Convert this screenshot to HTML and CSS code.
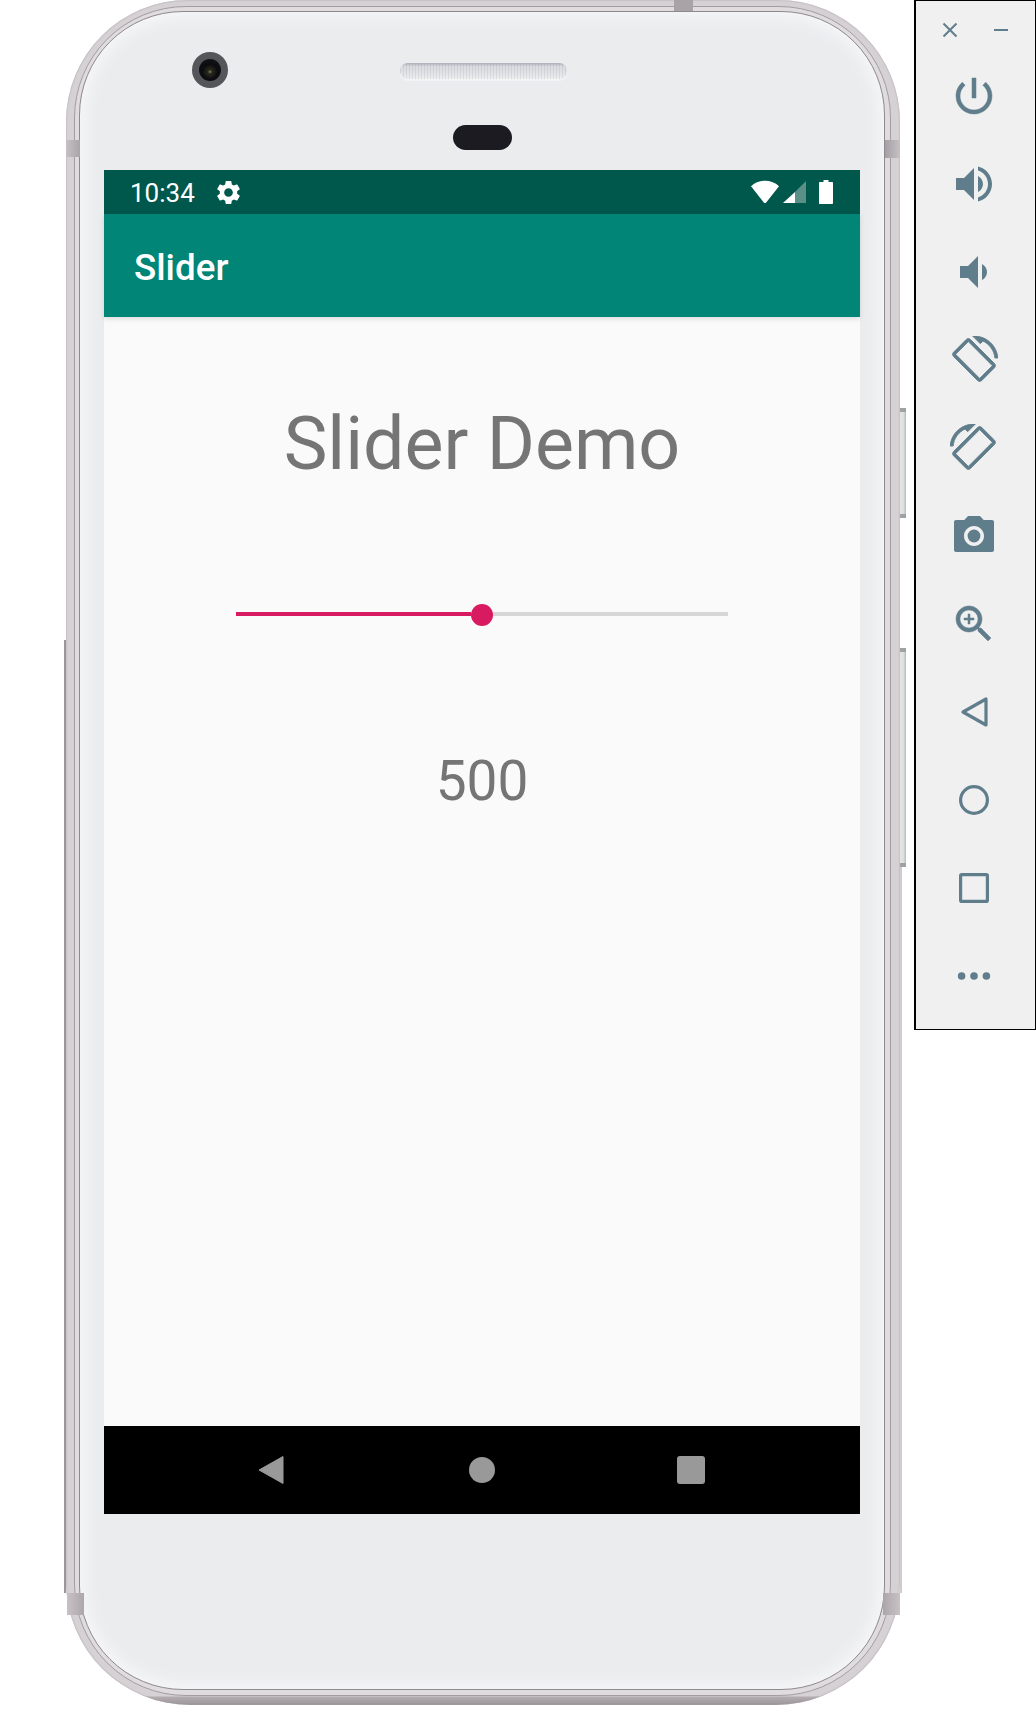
FILE: index.html
```html
<!DOCTYPE html>
<html lang="en">
<head>
<meta charset="utf-8">
<title>Slider</title>
<link rel="stylesheet" href="styles.css">
</head>
<body>
<div class="stage">
  <div class="phone">
    <span class="seam seam-top"></span>
    <span class="seam seam-lt"></span>
    <span class="seam seam-rt"></span>
    <span class="seam seam-lb"></span>
    <span class="seam seam-rb"></span>
    <span class="side-key key-power"></span>
    <span class="side-key key-volume"></span>
    <span class="left-edge"></span>
    <span class="right-edge"></span>
    <div class="rim">
      <div class="face">
        <div class="top-zone">
          <div class="top-row">
            <div class="lens"><div class="lens-glass"></div></div>
            <div class="speaker"></div>
          </div>
          <div class="sensor"></div>
        </div>
        <div class="screen">
          <div class="status-bar">
            <span class="clock">10:34</span>
            <svg class="gear" viewBox="0 0 24 24"><path d="M19.14 12.94c.04-.3.06-.61.06-.94 0-.32-.02-.64-.07-.94l2.03-1.58c.18-.14.23-.41.12-.61l-1.92-3.32c-.12-.22-.37-.29-.59-.22l-2.39.96c-.5-.38-1.03-.7-1.62-.94l-.36-2.54c-.04-.24-.24-.41-.48-.41h-3.84c-.24 0-.43.17-.47.41l-.36 2.54c-.59.24-1.13.57-1.62.94l-2.39-.96c-.22-.08-.47 0-.59.22L2.74 8.87c-.12.21-.08.47.12.61l2.03 1.58c-.05.3-.09.63-.09.94s.02.64.07.94l-2.03 1.58c-.18.14-.23.41-.12.61l1.92 3.32c.12.22.37.29.59.22l2.39-.96c.5.38 1.03.7 1.62.94l.36 2.54c.05.24.24.41.48.41h3.84c.24 0 .44-.17.47-.41l.36-2.54c.59-.24 1.13-.56 1.62-.94l2.39.96c.22.08.47 0 .59-.22l1.92-3.32c.12-.22.07-.47-.12-.61l-2.01-1.58zM12 15.6c-1.98 0-3.6-1.62-3.6-3.6s1.62-3.6 3.6-3.6 3.6 1.62 3.6 3.6-1.62 3.6-3.6 3.6z"/></svg>
            <span class="status-spacer"></span>
            <svg class="wifi" viewBox="0 0 28 24"><path d="M0 6.2C3.6 2.700 8.600 .8 14 .8s10.400 1.900 14 5.400L15.200 22.500c-.6.8-1.800.8-2.400 0z"/></svg>
            <svg class="signal" viewBox="0 0 23 24"><path class="signal-dim" d="M23 1v22H12V12z"/><path d="M12 12v11H0z"/></svg>
            <svg class="battery" viewBox="0 0 14 24"><path d="M4.500 0h5v2H13c.6 0 1 .4 1 1v20c0 .6-.4 1-1 1H1c-.6 0-1-.4-1-1V3c0-.6.4-1 1-1h3.500z"/></svg>
          </div>
          <div class="app-bar"><span class="app-title">Slider</span></div>
          <div class="content">
            <h1 class="demo-title">Slider Demo</h1>
            <div class="slider">
              <div class="slider-fill"></div>
              <div class="slider-thumb"></div>
              <div class="slider-rest"></div>
            </div>
            <div class="slider-value">500</div>
          </div>
          <div class="nav-bar">
            <svg class="nav-back" viewBox="0 0 26 30"><path d="M25 1.500v27L1 15z"/></svg>
            <span class="nav-home"></span>
            <span class="nav-recent"></span>
          </div>
        </div>
      </div>
    </div>
  </div>
  <aside class="tools">
    <div class="tools-head">
      <svg class="head-icon" viewBox="0 0 16 16"><path d="M1.500 1.500l13 13M14.500 1.500l-13 13"/></svg>
      <svg class="head-icon" viewBox="0 0 16 16"><path d="M1 8h14"/></svg>
    </div>
    <svg class="tool tool-bold" viewBox="0 0 24 24"><path d="M13 3h-2v10h2V3zm4.830 2.170l-1.420 1.420C17.990 7.860 19 9.810 19 12c0 3.870-3.130 7-7 7s-7-3.130-7-7c0-2.190 1.010-4.140 2.580-5.420L6.170 5.170C4.230 6.820 3 9.260 3 12c0 4.970 4.030 9 9 9s9-4.030 9-9c0-2.740-1.230-5.180-3.170-6.830z"/></svg>
    <svg class="tool" viewBox="0 0 24 24"><path d="M3 9v6h4l5 5V4L7 9H3zm13.500 3c0-1.770-1.020-3.290-2.500-4.030v8.050c1.480-.73 2.500-2.250 2.500-4.020zM14 3.230v2.060c2.890.86 5 3.540 5 6.710s-2.110 5.850-5 6.710v2.060c4.010-.91 7-4.490 7-8.770s-2.990-7.860-7-8.770z"/></svg>
    <svg class="tool" viewBox="0 0 24 24"><path d="M18.500 12c0-1.770-1.020-3.290-2.500-4.030v8.050c1.480-.73 2.500-2.250 2.500-4.020zM5 9v6h4l5 5V4L9 9H5z"/></svg>
    <svg class="tool tool-heavy" viewBox="0 0 24 24"><path d="M16.480 2.520c3.270 1.550 5.610 4.720 5.970 8.480h1.500C23.440 4.840 18.290 0 12 0l-.66.030 3.810 3.810 1.330-1.320zm-6.250-.77c-.59-.59-1.540-.59-2.120 0L1.750 8.110c-.59.59-.59 1.540 0 2.120l12.020 12.020c.59.59 1.540.59 2.120 0l6.360-6.360c.59-.59.59-1.540 0-2.120L10.230 1.750zm4.600 19.440L2.810 9.170l6.360-6.360 12.020 12.020-6.360 6.360z"/></svg>
    <svg class="tool tool-heavy tool-mirror" viewBox="0 0 24 24"><path d="M16.480 2.520c3.270 1.550 5.610 4.720 5.970 8.480h1.500C23.440 4.840 18.290 0 12 0l-.66.030 3.810 3.810 1.330-1.320zm-6.250-.77c-.59-.59-1.540-.59-2.120 0L1.750 8.110c-.59.59-.59 1.540 0 2.120l12.020 12.020c.59.59 1.540.59 2.120 0l6.360-6.360c.59-.59.59-1.540 0-2.120L10.230 1.750zm4.600 19.440L2.810 9.170l6.360-6.360 12.020 12.020-6.360 6.360z"/></svg>
    <svg class="tool" viewBox="0 0 24 24"><path fill-rule="evenodd" d="M9 2L7.170 4H3c-.6 0-1 .4-1 1v14c0 .6.4 1 1 1h18c.6 0 1-.4 1-1V5c0-.6-.4-1-1-1h-4.170L15 2H9zm3 15c-2.760 0-5-2.240-5-5s2.240-5 5-5 5 2.240 5 5-2.240 5-5 5z"/><circle cx="12" cy="12" r="3.200"/></svg>
    <svg class="tool tool-bold" viewBox="0 0 24 24"><path d="M15.500 14h-.79l-.28-.27C15.410 12.590 16 11.110 16 9.500 16 5.910 13.090 3 9.500 3S3 5.910 3 9.500 5.910 16 9.500 16c1.610 0 3.090-.59 4.230-1.570l.27.280v.79l5 4.990L20.490 19l-4.990-5zm-6 0C7.010 14 5 11.990 5 9.500S7.010 5 9.500 5 14 7.010 14 9.500 11.990 14 9.500 14zm2.500-4h-2v2H9v-2H7V9h2V7h1v2h2v1z"/></svg>
    <svg class="tool tool-line" viewBox="0 0 24 24"><path d="M18 5.500v13L6.500 12z"/></svg>
    <svg class="tool tool-line" viewBox="0 0 24 24"><circle cx="12" cy="12" r="6.700"/></svg>
    <svg class="tool tool-line" viewBox="0 0 24 24"><rect x="5.300" y="5.300" width="13.400" height="13.400" rx=".6"/></svg>
    <svg class="tool" viewBox="0 0 24 24"><circle cx="5.800" cy="12" r="1.900"/><circle cx="12" cy="12" r="1.900"/><circle cx="18.200" cy="12" r="1.900"/></svg>
  </aside>
</div>
</body>
</html>
```
FILE: styles.css
```css
* { box-sizing: border-box; }
html, body { margin: 0; padding: 0; background: #fff; }
body { width: 1036px; height: 1728px; overflow: hidden; font-family: Roboto, "Liberation Sans", sans-serif; }

.stage { display: flex; align-items: flex-start; }

/* Device shell */
.phone {
  position: relative;
  flex: none;
  width: 834px;
  height: 1705px;
  margin-left: 66px;
  padding: 6px 9px 9px 8px;
  border-radius: 122px 122px 124px 124px;
  background: linear-gradient(180deg, #d6d1d4 0, #d6d1d4 1696px, #b3acb0 1697px, #9c9499 1705px);
  box-shadow: inset 0 0 2px #a39da1;
}
.rim {
  height: 100%;
  padding: 4px 5px 5px 4px;
  border: 1px solid #a29da1;
  border-radius: 112px;
  background: #e0dcde;
}
.face {
  display: flex;
  flex-direction: column;
  height: 100%;
  padding: 0 24px;
  border: 1px solid #8f8a8e;
  border-radius: 104px;
  background: #ebecee;
  box-shadow: inset 0 0 14px 6px #f5f6f8;
}
.seam { position: absolute; background: linear-gradient(90deg, #c6c0c4, #aaa5a9); }
.seam-top { left: 608px; top: 0; width: 19px; height: 11px; background: #a9a3a7; }
.seam-lt { left: 0; top: 140px; width: 14px; height: 17px; }
.seam-rt { right: 0; top: 140px; width: 15px; height: 18px; background: linear-gradient(90deg, #a5a0a4, #c6c0c4); }
.seam-lb { left: 1px; top: 1593px; width: 17px; height: 22px; background: linear-gradient(90deg, #c8c2c6, #aca6aa); }
.seam-rb { right: 0; top: 1593px; width: 17px; height: 22px; background: linear-gradient(90deg, #aca6aa, #c8c2c6); }
.side-key {
  position: absolute; right: -6px; width: 6px;
  border-top: 4px solid #9fa2a3; border-bottom: 4px solid #9fa2a3;
  background: linear-gradient(90deg, #e6e8e6 0, #dcdedc 60%, #b6b9ba 100%);
}
.key-power { top: 408px; height: 110px; }
.key-volume { top: 648px; height: 219px; }
.left-edge { position: absolute; left: -2px; top: 640px; width: 2px; height: 953px; background: #98989b; }
.right-edge { position: absolute; right: -2px; top: 867px; width: 2px; height: 726px; background: #d0cbce; }

/* Earpiece area */
.top-zone { flex: none; height: 158px; display: flex; flex-direction: column; padding-top: 40px; }
.top-row { display: flex; align-items: flex-start; }
.lens {
  width: 36px; height: 36px; margin-left: 88px; border-radius: 50%;
  display: flex; align-items: center; justify-content: center;
  background: #55565a;
}
.lens-glass {
  width: 22px; height: 22px; border-radius: 50%;
  background: radial-gradient(circle at 50% 58%, #8a8a4a 0, #2a2a20 12%, #0c0c10 45%, #17171b 100%);
}
.speaker {
  width: 167px; height: 16px; margin: 11px 0 0 172px; border-radius: 8px;
  background:
    repeating-linear-gradient(90deg, rgba(150,155,165,.22) 0 1px, transparent 1px 3px),
    linear-gradient(180deg, #aeb1ba 0, #d9dbe0 22%, #e3e5e8 70%, #eff0f2 100%);
  box-shadow: 0 2px 1px #f2f3f5;
}
.sensor { width: 59px; height: 25px; margin: 37px 0 0 349px; border-radius: 13px; background: #1b1b21; }

/* Screen */
.screen { flex: none; width: 756px; height: 1344px; display: flex; flex-direction: column; background: #fafafa; }
.status-bar {
  flex: none; height: 44px; display: flex; align-items: center;
  padding: 0 27px 0 26px; background: #00574b; color: #fff;
}
.clock { font-size: 26px; line-height: 44px; width: 64px; padding-top: 2px; }
.gear { width: 29px; height: 29px; margin-left: 20px; fill: #fff; }
.status-spacer { flex: 1; }
.wifi { width: 28px; height: 24px; fill: #fff; margin-right: 4px; }
.signal { width: 23px; height: 24px; fill: #fff; margin-right: 13px; }
.signal-dim { opacity: .35; }
.battery { width: 14px; height: 24px; fill: #fff; }

.app-bar {
  flex: none; height: 103px; display: flex; align-items: center; padding: 4px 30px 0;
  background: #008577; box-shadow: 0 2px 5px rgba(0,0,0,.12); position: relative;
}
.app-title { font-size: 36.750px; font-weight: 500; color: #fff; }

.content { flex: 1; display: flex; flex-direction: column; align-items: center; }
.demo-title { margin: 86px 0 0; font-size: 73.500px; line-height: 82px; font-weight: 400; color: #757575; }
.slider { width: 492px; height: 23px; margin-top: 118px; display: flex; align-items: flex-start; }
.slider-fill { flex: none; width: 235px; height: 4px; margin-top: 9px; background: #d81b60; }
.slider-thumb { flex: none; width: 22px; height: 22px; margin-top: 1px; border-radius: 50%; background: #d81b60; }
.slider-rest { flex: 1; height: 4px; margin-top: 9px; background: #d6d6d6; }
.slider-value { margin-top: 122px; font-size: 55px; line-height: 66px; color: #757575; }

.nav-bar { flex: none; height: 88px; display: block; position: relative; background: #000; }
.nav-back { position: absolute; left: 154px; top: 29px; width: 26px; height: 30px; fill: #999; stroke: #999; stroke-width: 1; stroke-linejoin: round; }
.nav-home { position: absolute; left: 365px; top: 31px; width: 26px; height: 26px; border-radius: 50%; background: #999; }
.nav-recent { position: absolute; left: 573px; top: 30px; width: 28px; height: 28px; border-radius: 3px; background: #999; }

/* Emulator toolbar */
.tools {
  flex: none; width: 122px; height: 1030px; margin-left: 14px; padding-right: 2.500px;
  display: flex; flex-direction: column; align-items: center;
  border: 2px solid #000; border-width: 1.500px 1.500px 1.500px 2px;
  background: #f0f0f0;
}
.tools-head { flex: none; width: 100%; height: 51px; display: flex; justify-content: space-between; padding: 21px 24px 0 26px; }
.head-icon { width: 16px; height: 16px; fill: none; stroke: #607d8b; stroke-width: 2; }
.tool { flex: none; width: 48px; height: 48px; margin: 20px 0; fill: #607d8b; }
.tool-bold { stroke: #607d8b; stroke-width: .25; }
.tool-heavy { stroke: #607d8b; stroke-width: .45; }
.tool-mirror { transform: scaleX(-1); }
.tool-line { fill: none; stroke: #607d8b; stroke-width: 1.600; stroke-linejoin: round; }
```
